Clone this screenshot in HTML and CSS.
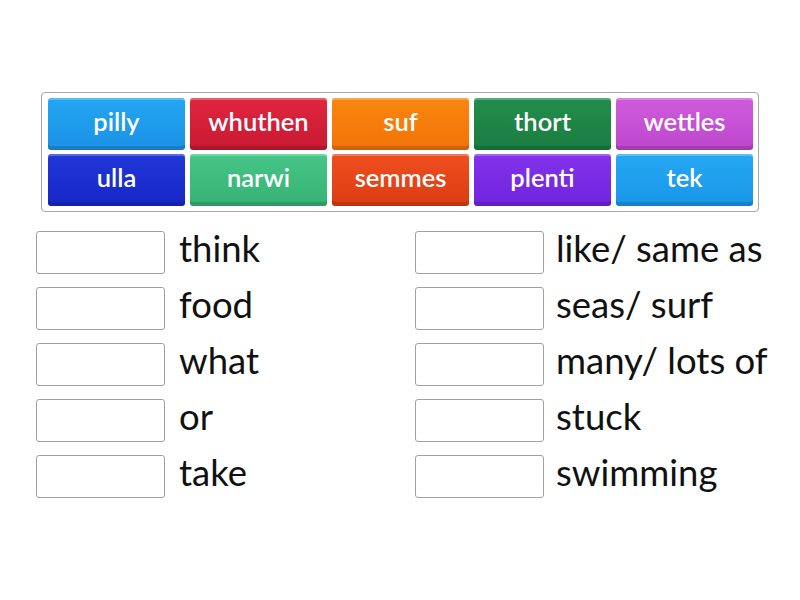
FILE: index.html
```html
<!DOCTYPE html>
<html>
<head>
<meta charset="utf-8">
<link rel="stylesheet" href="styles.css">
</head>
<body>
<div class="page">
  <div class="bank">
    <div class="tile c1">pilly</div>
    <div class="tile c2">whuthen</div>
    <div class="tile c3">suf</div>
    <div class="tile c4">thort</div>
    <div class="tile c5">wettles</div>
    <div class="tile c6">ulla</div>
    <div class="tile c7">narwi</div>
    <div class="tile c8">semmes</div>
    <div class="tile c9">plenti</div>
    <div class="tile c10">tek</div>
  </div>
  <div class="answers">
    <div class="col">
      <div class="row"><div class="box"></div><span class="label">think</span></div>
      <div class="row"><div class="box"></div><span class="label">food</span></div>
      <div class="row"><div class="box"></div><span class="label">what</span></div>
      <div class="row"><div class="box"></div><span class="label">or</span></div>
      <div class="row"><div class="box"></div><span class="label">take</span></div>
    </div>
    <div class="col">
      <div class="row"><div class="box"></div><span class="label">like/ same as</span></div>
      <div class="row"><div class="box"></div><span class="label">seas/ surf</span></div>
      <div class="row"><div class="box"></div><span class="label">many/ lots of</span></div>
      <div class="row"><div class="box"></div><span class="label">stuck</span></div>
      <div class="row"><div class="box"></div><span class="label">swimming</span></div>
    </div>
  </div>
</div>
</body>
</html>
```
FILE: styles.css
```css
html, body {
  margin: 0;
  padding: 0;
  background: #ffffff;
}
.page {
  width: 800px;
  height: 600px;
  padding-top: 92px;
  box-sizing: border-box;
  font-family: Lato, "Open Sans", sans-serif;
}
.bank {
  width: 718px;
  margin: 0 auto;
  box-sizing: border-box;
  border: 1px solid #a8a8a8;
  border-radius: 4px;
  padding: 5px 6px 5px 6px;
  display: grid;
  grid-template-columns: repeat(5, 137px);
  grid-auto-rows: 52px;
  column-gap: 5px;
  row-gap: 4px;
}
.tile {
  border-radius: 3px;
  color: #ffffff;
  font-size: 25.5px;
  font-weight: 600;
  display: flex;
  align-items: center;
  justify-content: center;
  padding-bottom: 6px;
  box-sizing: border-box;
  box-shadow: inset 0 2px 0 rgba(255,255,255,0.25), inset 0 -4px 0 rgba(0,0,0,0.14);
}
.c1 { background: linear-gradient(#23a6f2, #1b91e6); }
.c2 { background: linear-gradient(#e0263f, #c81932); }
.c3 { background: linear-gradient(#fb860f, #f17307); }
.c4 { background: linear-gradient(#238d4d, #1b7d41); }
.c5 { background: linear-gradient(#cf5bdc, #bc47cc); }
.c6 { background: linear-gradient(#2137d8, #1726c7); }
.c7 { background: linear-gradient(#46c587, #36b374); }
.c8 { background: linear-gradient(#ef4e1f, #dc3c12); }
.c9 { background: linear-gradient(#8332ea, #7024de); }
.c10 { background: linear-gradient(#25a8f3, #1996e8); }
.answers {
  margin-top: 19px;
  padding-left: 36px;
  display: grid;
  grid-template-columns: 379px 379px;
}
.col {
  display: flex;
  flex-direction: column;
  gap: 13px;
}
.row {
  display: flex;
  align-items: flex-start;
  height: 43px;
}
.box {
  width: 129px;
  height: 43px;
  box-sizing: border-box;
  border: 1px solid #a0a0a0;
  border-radius: 3px;
  background: #fff;
  flex: none;
}
.label {
  margin-left: 14px;
  margin-top: -4px;
  font-size: 36.5px;
  color: #111;
  white-space: nowrap;
  line-height: 43px;
}
.col + .col .label {
  margin-left: 12px;
}
```
